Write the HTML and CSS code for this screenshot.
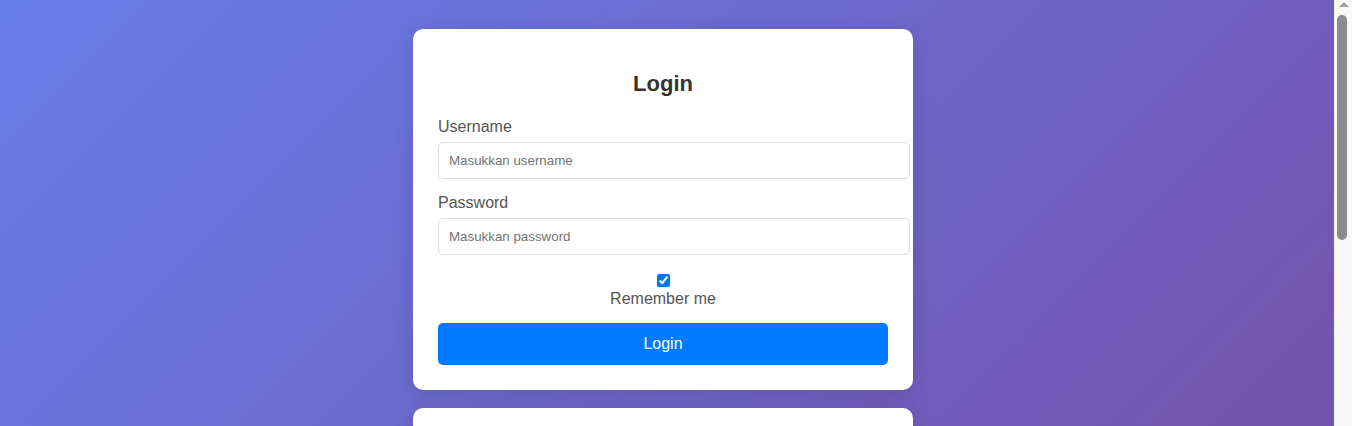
FILE: index.html
```html
<!DOCTYPE html>
<html lang="id">
<head>
<meta charset="utf-8">
<title>Login</title>
<link rel="stylesheet" href="styles.css">
</head>
<body>
<div class="page">
  <div class="card">
    <h2 class="card-title">Login</h2>
    <form class="form">
      <div class="form-group">
        <label class="field-label" for="username">Username</label>
        <input class="field-input" type="text" id="username" placeholder="Masukkan username">
      </div>
      <div class="form-group">
        <label class="field-label" for="password">Password</label>
        <input class="field-input" type="password" id="password" placeholder="Masukkan password">
      </div>
      <div class="form-group remember">
        <input class="remember-check" type="checkbox" id="remember" checked>
        <label class="remember-label" for="remember">Remember me</label>
      </div>
      <button class="btn" type="submit">Login</button>
    </form>
  </div>
  <div class="card">
    <h2 class="card-title">Daftar Pengguna</h2>
    <p class="card-text">Belum ada data pengguna yang tersimpan.</p>
    <div class="form-group">
      <label class="field-label" for="search">Cari</label>
      <input class="field-input" type="text" id="search" placeholder="Cari username">
    </div>
    <button class="btn" type="button">Muat Ulang</button>
  </div>
</div>
<div class="scrollbar" aria-hidden="true">
  <div class="scrollbar-arrow"></div>
  <div class="scrollbar-thumb"></div>
</div>
</body>
</html>
```

FILE: styles.css
```css
html {
  margin: 0;
  overflow: hidden;
}
body {
  margin: 0;
  font-family: "Liberation Sans", Arial, sans-serif;
  background: linear-gradient(135deg, #667eea 0%, #764ba2 100%);
  color: #333;
}
.page {
  display: flex;
  flex-direction: column;
  align-items: center;
  gap: 18px;
  padding: 29px 26px 29px 0;
}
.card {
  width: 500px;
  box-sizing: border-box;
  background: #fff;
  border-radius: 10px;
  padding: 21px 25px 25px;
  box-shadow: 0 4px 20px rgba(0, 0, 0, 0.12);
}
.card-title {
  text-align: center;
  font-size: 22px;
  margin: 21px 0 21px;
  color: #333;
}
.form-group {
  margin-bottom: 15px;
}
.field-label {
  display: block;
  font-size: 16px;
  margin-bottom: 6px;
  color: #555;
}
.field-input {
  display: block;
  box-sizing: content-box;
  width: 100%;
  height: 15px;
  padding: 10px;
  border: 1px solid #ddd;
  border-radius: 5px;
  font-family: "Liberation Sans", Arial, sans-serif;
  font-size: 13.333px;
  color: #333;
  margin: 0;
}
.field-input::placeholder {
  color: #757575;
}
.remember {
  text-align: center;
  font-size: 16px;
}
.remember-check {
  margin: 4px 3px 3px 4px;
  vertical-align: top;
}
.remember-label {
  display: block;
  color: #555;
}
.btn {
  display: block;
  width: 100%;
  padding: 12px;
  border: none;
  border-radius: 5px;
  background: #007bff;
  color: #fff;
  font-family: "Liberation Sans", Arial, sans-serif;
  font-size: 16px;
  cursor: pointer;
}
.card-text {
  font-size: 16px;
  color: #555;
  text-align: center;
  margin: 0 0 20px;
}
.scrollbar {
  position: fixed;
  top: 0;
  right: 0;
  width: 18px;
  height: 100vh;
  background: #f9f9f9;
  border-left: 1px solid #f0f0f0;
  box-sizing: border-box;
}
.scrollbar-arrow {
  margin: 2px auto 0;
  width: 0;
  height: 0;
  border-left: 5px solid transparent;
  border-right: 5px solid transparent;
  border-bottom: 5px solid #a3a3a3;
}
.scrollbar-thumb {
  margin: 8px 0 0 2px;
  width: 10px;
  height: 225px;
  border-radius: 5px;
  background: #8c8c8c;
}
```
